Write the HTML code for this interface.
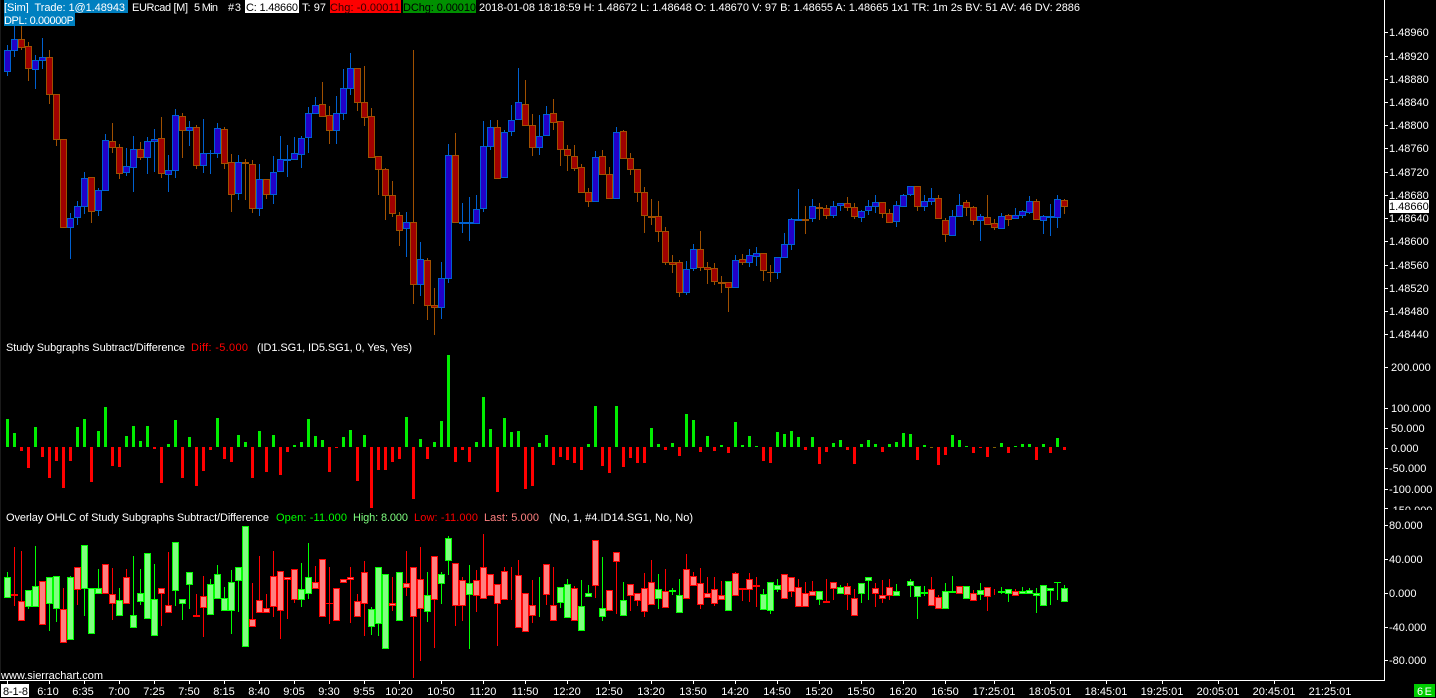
<!DOCTYPE html>
<html><head><meta charset="utf-8"><title>EURcad chart</title>
<style>
html,body{margin:0;padding:0;background:#000;width:1436px;height:698px;overflow:hidden}
svg{display:block;position:absolute;left:0;top:0}
text{font-family:"Liberation Sans",sans-serif;font-size:11px;fill:#fff;white-space:pre}
.m{text-anchor:middle}
</style></head><body>
<svg id="s" xmlns="http://www.w3.org/2000/svg" width="1436" height="698" viewBox="0 0 1436 698" shape-rendering="crispEdges">
<defs><clipPath id="c1"><rect x="1386" y="340" width="50" height="170"/></clipPath></defs>
<rect width="1436" height="698" fill="#000"/>
<rect x="0" y="0" width="1" height="680" fill="#1a1a1a"/>
<g id="bars"></g>
<rect x="1384" y="0" width="1" height="681" fill="#fff"/>
<rect x="0" y="680" width="1385" height="1" fill="#fff"/>
<g id="ticks" fill="#fff"></g>

<rect x="4" y="0" width="124" height="13" fill="#0080c0"/>
<text x="4" y="11" textLength="121">[Sim]  Trade: 1@1.48943</text>
<text x="132" y="11" textLength="56">EURcad [M]</text>
<text x="194" y="11" textLength="24">5 Min</text>
<text x="228" y="11" textLength="13">#3</text>
<rect x="245" y="0" width="54" height="13" fill="#fff"/>
<text x="246" y="11" textLength="52" style="fill:#000">C: 1.48660</text>
<text x="302" y="11" textLength="24">T: 97</text>
<rect x="330" y="0" width="71" height="13" fill="#ff0000"/>
<text x="330" y="11" textLength="70" style="fill:#300">Chg: -0.00011</text>
<rect x="403" y="0" width="73" height="13" fill="#009000"/>
<text x="403" y="11" textLength="73" style="fill:#000">DChg: 0.00010</text>
<text x="479" y="11" textLength="601">2018-01-08 18:18:59 H: 1.48672 L: 1.48648 O: 1.48670 V: 97 B: 1.48655 A: 1.48665 1x1 TR: 1m 2s BV: 51 AV: 46 DV: 2886</text>
<rect x="4" y="13" width="71" height="13" fill="#0080c0"/>
<text x="4" y="24" textLength="70">DPL: 0.00000P</text>

<text x="6" y="351" textLength="179">Study Subgraphs Subtract/Difference</text>
<text x="191" y="351" textLength="57" style="fill:#ff0000">Diff: -5.000</text>
<text x="257" y="351" textLength="155">(ID1.SG1, ID5.SG1, 0, Yes, Yes)</text>

<text x="6" y="521" textLength="263">Overlay OHLC of Study Subgraphs Subtract/Difference</text>
<text x="276" y="521" textLength="71" style="fill:#00ff00">Open: -11.000</text>
<text x="353" y="521" textLength="55" style="fill:#80ff80">High: 8.000</text>
<text x="414" y="521" textLength="64" style="fill:#ff0000">Low: -11.000</text>
<text x="484" y="521" textLength="55" style="fill:#ff8080">Last: 5.000</text>
<text x="549" y="521" textLength="144">(No, 1, #4.ID14.SG1, No, No)</text>
<text x="1" y="679" textLength="102">www.sierrachart.com</text>

<g>
<text x="1389" y="36">1.48960</text><text x="1389" y="60">1.48920</text><text x="1389" y="83">1.48880</text><text x="1389" y="106">1.48840</text><text x="1389" y="129">1.48800</text><text x="1389" y="152">1.48760</text><text x="1389" y="176">1.48720</text><text x="1389" y="199">1.48680</text><text x="1389" y="222">1.48640</text><text x="1389" y="245">1.48600</text><text x="1389" y="269">1.48560</text><text x="1389" y="292">1.48520</text><text x="1389" y="315">1.48480</text><text x="1389" y="338">1.48440</text>
<rect x="1389" y="200" width="40" height="13" fill="#fff"/>
<text x="1389" y="210" style="fill:#000">1.48660</text>
<text x="1391" y="371">200.000</text><text x="1391" y="412">100.000</text><text x="1391" y="432">50.000</text><text x="1391" y="452">0.000</text><text x="1389" y="472">-50.000</text><text x="1389" y="493">-100.000</text><text x="1389" y="514" clip-path="url(#c1)">-150.000</text>
<text x="1389" y="529">80.000</text><text x="1389" y="563">40.000</text><text x="1389" y="597">0.000</text><text x="1389" y="631">-40.000</text><text x="1389" y="664">-80.000</text>
</g>

<rect x="1" y="684" width="28" height="13" fill="#fff"/>
<text x="3" y="695" textLength="25" style="fill:#000">8-1-8</text>
<g>
<text class="m" x="48" y="695">6:10</text><text class="m" x="83" y="695">6:35</text><text class="m" x="119" y="695">7:00</text><text class="m" x="154" y="695">7:25</text><text class="m" x="189" y="695">7:50</text><text class="m" x="224" y="695">8:15</text><text class="m" x="259" y="695">8:40</text><text class="m" x="294" y="695">9:05</text><text class="m" x="329" y="695">9:30</text><text class="m" x="364" y="695">9:55</text><text class="m" x="399" y="695">10:20</text><text class="m" x="441" y="695">10:50</text><text class="m" x="483" y="695">11:20</text><text class="m" x="525" y="695">11:50</text><text class="m" x="567" y="695">12:20</text><text class="m" x="609" y="695">12:50</text><text class="m" x="651" y="695">13:20</text><text class="m" x="693" y="695">13:50</text><text class="m" x="735" y="695">14:20</text><text class="m" x="777" y="695">14:50</text><text class="m" x="819" y="695">15:20</text><text class="m" x="861" y="695">15:50</text><text class="m" x="903" y="695">16:20</text><text class="m" x="945" y="695">16:50</text><text class="m" x="994" y="695">17:25:01</text><text class="m" x="1050" y="695">18:05:01</text><text class="m" x="1106" y="695">18:45:01</text><text class="m" x="1162" y="695">19:25:01</text><text class="m" x="1218" y="695">20:05:01</text><text class="m" x="1274" y="695">20:45:01</text><text class="m" x="1330" y="695">21:25:01</text>
</g>
<rect x="1414" y="684" width="21" height="13" fill="#00cc00"/>
<text x="1417" y="695" textLength="15">6 E</text>
</svg>
<script>
var P="u45,50,71,75|u22,39,50,56|r26,39,47,49|r42,46,68,80|u55,60,69,88|u38,57,60,68|r50,57,94,103|r94,94,139,145|r139,139,227,227|u213,218,227,258|u201,206,217,224|u172,178,206,213|r177,177,211,222|u188,190,210,215|u134,140,190,190|r123,141,147,152|r144,147,173,178|u148,166,172,175|u136,149,167,191|r142,149,157,159|u137,141,157,173|u129,139,141,171|r117,138,173,177|u155,170,174,191|u109,115,170,177|r113,116,130,157|u121,127,130,145|r125,127,165,168|u119,153,165,172|u150,153,153,173|u123,128,153,157|r127,129,163,168|r154,162,194,211|u155,162,193,199|r159,162,163,199|r160,164,208,212|u164,179,208,215|r179,179,194,198|u156,172,194,203|u136,159,171,171|u145,159,160,176|u137,153,159,159|u136,138,154,167|u107,113,137,152|u97,105,113,113|r82,104,116,116|r106,115,130,143|u96,113,130,143|u69,88,113,119|u53,68,88,94|r68,68,102,110|r66,102,117,125|r108,116,157,157|r156,156,169,194|r168,169,195,219|r181,195,213,216|r212,215,230,245|u212,222,228,256|r50,222,284,303|u242,259,284,295|r258,260,305,319|r288,305,307,334|u262,278,307,318|u144,155,278,282|r133,155,222,222|u203,222,223,232|u197,222,223,240|u195,209,223,223|u121,146,208,211|u120,127,146,149|r120,127,178,178|u130,132,177,177|u105,120,131,135|u68,102,119,119|r80,104,125,125|r114,125,147,155|u115,136,147,154|u106,114,135,135|r99,113,122,129|r121,121,149,165|r145,149,155,170|r145,156,168,170|r164,167,192,192|r188,192,201,206|u151,157,201,201|r150,156,174,174|r167,174,198,198|u127,132,198,198|r130,131,158,158|r153,158,169,174|r169,169,192,201|r187,192,215,232|r199,216,217,224|r201,216,231,241|r227,231,262,264|r255,262,264,272|r260,262,292,296|u261,269,292,294|u244,249,268,270|r231,249,267,270|r262,267,269,283|r263,268,281,284|r276,282,283,292|r282,282,287,311|u255,260,287,287|r254,259,262,264|u249,255,262,266|u247,253,256,265|r253,253,270,280|r265,272,272,281|u257,257,272,278|u233,244,257,257|u218,219,244,249|u189,219,220,220|r206,219,220,233|u199,206,218,221|r203,207,208,219|r205,208,215,218|u201,206,215,217|u203,203,205,210|r197,203,207,210|r203,207,216,218|u210,211,217,221|u200,206,210,214|u195,202,206,212|r202,202,213,217|r209,213,222,222|u201,205,221,226|u194,195,206,206|u186,186,194,195|r186,186,206,210|u195,201,206,210|u188,198,201,204|r195,198,218,218|r218,220,234,241|u210,216,235,235|u194,205,216,216|r200,202,207,215|r206,207,220,224|u214,216,220,240|r195,217,224,224|r219,223,227,229|u213,216,228,228|r214,215,219,225|u208,215,218,218|u210,211,215,217|u196,201,212,213|r199,201,219,219|u215,216,220,233|u204,216,217,235|u195,199,217,227|r199,200,206,213";
var D=[28,14,-4,-21,20,-10,-31,-14,-41,-14,20,28,-35,16,40,-19,-20,11,21,6,21,-2,-36,3,27,-31,10,-39,-24,-3,29,-12,-15,12,5,-31,16,-25,12,-28,-5,2,5,28,11,7,-25,-1,10,17,-34,12,-61,-23,-23,-15,-12,30,-52,8,-12,5,26,92,-15,-3,-15,5,50,18,-45,29,15,16,-42,-39,4,12,-18,-10,-13,-16,-23,3,41,-19,-26,41,-20,-11,-16,-16,19,3,-3,4,-9,33,27,-5,11,-4,2,-6,25,2,11,1,-14,-16,15,13,16,10,-3,10,-17,-5,4,7,-3,-17,3,7,3,-5,3,5,14,13,-13,2,0,-18,-8,12,7,1,-6,-1,-10,0,4,-6,1,3,3,-13,3,-6,9,-3];
var O="u572,577,597,597|r547,594,595,605|r551,601,620,620|u590,590,606,608|u546,586,606,606|r581,581,624,624|u577,577,603,630|u576,576,608,621|r588,609,642,642|u576,577,639,639|r567,567,589,604|u545,545,588,615|u588,588,633,633|u569,588,593,593|r564,564,593,593|r568,594,603,619|u588,600,615,615|r569,577,603,603|u556,615,627,627|u569,593,601,604|u553,553,618,618|u564,599,635,635|r588,588,593,625|r552,605,612,612|u542,542,590,605|u599,599,603,619|u572,572,584,608|r594,615,616,616|r576,596,607,636|u579,584,614,614|u565,574,598,598|u587,598,610,610|u570,582,610,633|u567,567,580,611|u526,526,646,646|r583,619,626,626|r556,600,612,612|r594,608,612,612|r551,576,606,616|r571,571,610,638|r577,577,579,618|r569,569,599,602|u563,589,599,606|u543,577,593,598|r566,582,588,588|r559,559,616,616|r567,603,603,623|r588,588,620,620|r579,579,582,582|r567,577,579,622|r594,601,616,616|r561,572,603,635|u607,609,626,634|u567,567,623,635|u574,574,648,648|r577,603,605,610|u572,572,620,620|r551,583,587,595|r567,567,616,677|r547,579,608,660|u572,595,611,621|r556,556,599,647|u572,574,583,603|u536,538,560,574|r563,563,605,625|r577,580,605,620|u565,583,594,648|r570,580,595,611|r534,567,598,598|r574,574,595,595|r584,584,603,645|r567,571,599,599|r567,0,0,599|r560,575,627,627|r593,593,631,631|r580,605,615,622|u577,0,0,616|r564,564,594,604|r567,605,620,620|u587,587,602,607|u579,584,617,617|r586,588,620,620|u580,606,630,630|u585,593,596,596|r540,540,585,597|u557,608,616,620|r590,590,610,610|r552,552,561,613|u582,600,615,615|r584,584,595,610|r593,593,600,605|r573,588,611,616|r560,582,604,604|u574,589,598,608|r569,591,607,607|u588,590,591,594|u579,595,612,612|r554,569,598,598|r572,576,585,585|r568,583,604,608|r577,593,597,597|r577,589,603,605|r581,595,599,599|u581,581,610,610|r572,573,595,595|r588,588,589,600|r573,579,589,601|r577,585,586,606|u589,594,609,609|u582,582,610,613|u579,585,589,591|r574,574,598,598|r577,577,591,596|r579,587,606,606|r582,593,606,606|r581,591,595,595|u591,591,599,604|r579,601,602,602|r582,582,588,599|u585,587,593,593|r583,586,594,609|r589,598,615,615|u583,583,593,602|u577,577,580,599|r583,588,593,606|r580,595,598,602|r579,587,595,599|u584,591,595,595||u579,581,585,596|u586,586,596,618|u586,592,593,595|r577,589,605,605|r595,597,608,608|u583,591,608,608|u576,591,592,592|r586,586,593,593|u586,586,598,598|r590,593,600,600|u583,590,594,599|r587,587,596,610|r589,0,0,594|u587,591,592,593|u589,589,593,601|r589,591,595,595|u587,591,593,593|u588,590,593,593|u588,593,595,612|u585,585,605,605|u588,588,590,604|u582,582,582,599|u585,588,601,601";
var out=[];
function R(x,y,w,h,f){out.push('<rect x="'+x+'" y="'+y+'" width="'+w+'" height="'+h+'" fill="'+f+'"/>');}
function candles(str,uo,uf,ro,rf){
  str.split("|").forEach(function(s,i){
    if(!s)return;
    var u=s[0]=="u",a=s.slice(1).split(",").map(Number),c=7+7*i,o=u?uo:ro,f=u?uf:rf;
    R(c,a[0],1,a[3]-a[0]+1,o);
    if(a[1]==0)return;
    var h=a[2]-a[1]+1;
    R(c-3,a[1],7,h,o);
    if(h>2)R(c-2,a[1]+1,5,h-2,f);
  });
}
candles(P,"#0060d0","#2200c8","#a05000","#a00000");
D.forEach(function(v,i){
  var c=7+7*i;
  if(v==0){R(c-1,447,3,1,"#806000");return;}
  if(v>0)R(c-1,447-v,3,v,"#00ee00");else R(c-1,447,3,-v,"#ff0000");
});
candles(O,"#00ff00","#80ff80","#ff0000","#ff8080");
document.getElementById("bars").innerHTML=out.join("");
var t=[];
[32,56,79,102,125,148,172,195,218,241,265,288,311,334,367,408,428,448,468,489,508,525,559,593,627,660].forEach(function(y){t.push('<rect x="1385" y="'+y+'" width="3" height="1"/>');});
[7,49,84,119,154,189,224,259,294,329,364,399,441,483,525,567,609,651,693,735,777,819,861,903,945,994,1050,1106,1162,1218,1274,1330].forEach(function(x){t.push('<rect x="'+x+'" y="681" width="1" height="3"/>');});
document.getElementById("ticks").innerHTML=t.join("");
</script>
</body></html>
